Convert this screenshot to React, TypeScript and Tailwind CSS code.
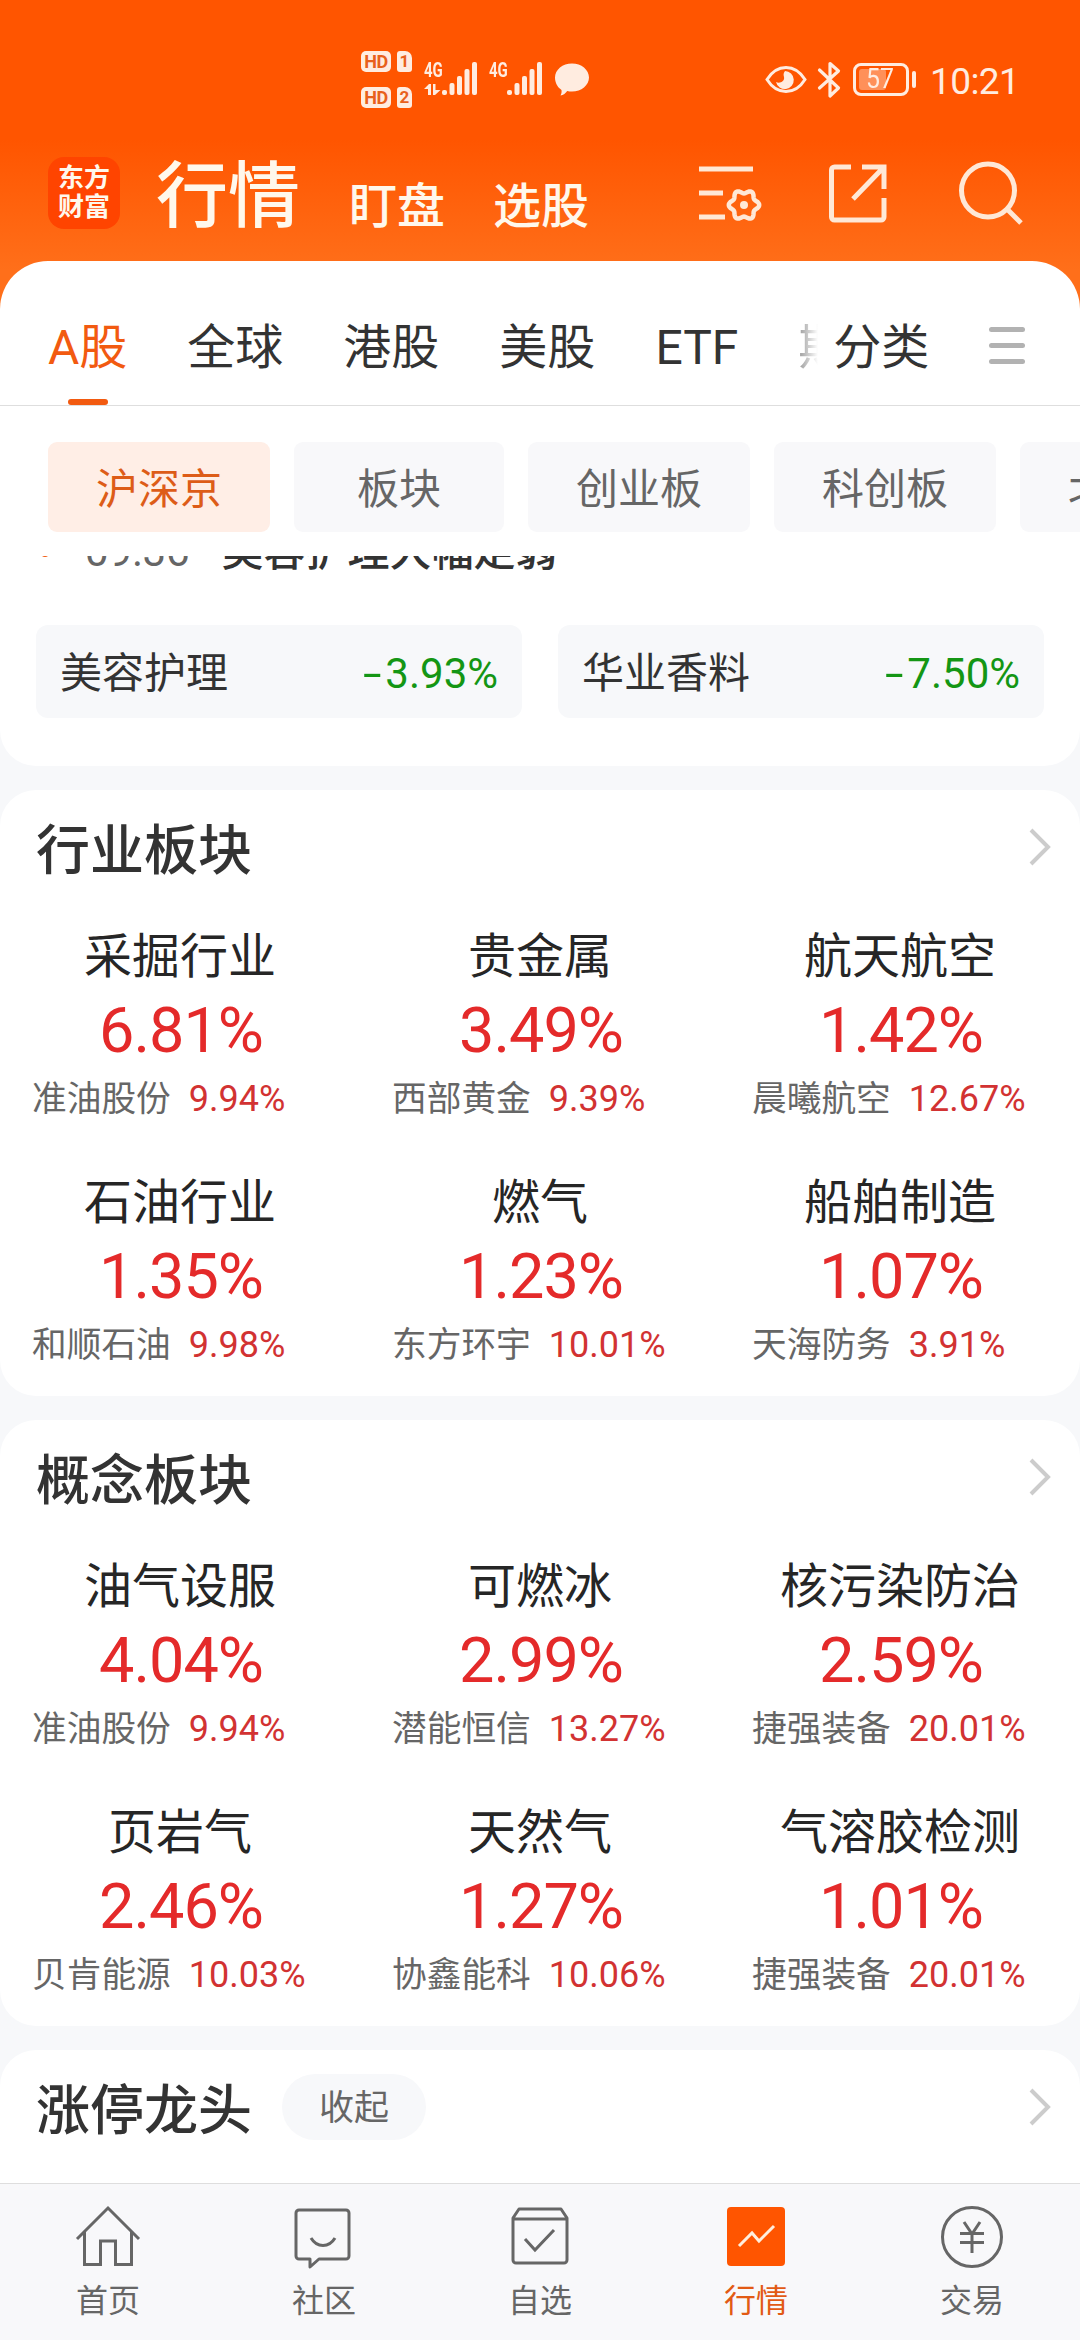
import { useState } from "react";
import type { ReactNode } from "react";

type Board = {
  name: string;
  change: string;
  stock: string;
  stockChange: string;
};

const industries: Board[] = [
  { name: "采掘行业", change: "6.81%", stock: "准油股份", stockChange: "9.94%" },
  { name: "贵金属", change: "3.49%", stock: "西部黄金", stockChange: "9.39%" },
  { name: "航天航空", change: "1.42%", stock: "晨曦航空", stockChange: "12.67%" },
  { name: "石油行业", change: "1.35%", stock: "和顺石油", stockChange: "9.98%" },
  { name: "燃气", change: "1.23%", stock: "东方环宇", stockChange: "10.01%" },
  { name: "船舶制造", change: "1.07%", stock: "天海防务", stockChange: "3.91%" },
];

const concepts: Board[] = [
  { name: "油气设服", change: "4.04%", stock: "准油股份", stockChange: "9.94%" },
  { name: "可燃冰", change: "2.99%", stock: "潜能恒信", stockChange: "13.27%" },
  { name: "核污染防治", change: "2.59%", stock: "捷强装备", stockChange: "20.01%" },
  { name: "页岩气", change: "2.46%", stock: "贝肯能源", stockChange: "10.03%" },
  { name: "天然气", change: "1.27%", stock: "协鑫能科", stockChange: "10.06%" },
  { name: "气溶胶检测", change: "1.01%", stock: "捷强装备", stockChange: "20.01%" },
];

const markets = ["A股", "全球", "港股", "美股", "ETF"];

const chips = [
  { label: "沪深京", width: "w-[222px]" },
  { label: "板块", width: "w-[210px]" },
  { label: "创业板", width: "w-[222px]" },
  { label: "科创板", width: "w-[222px]" },
  { label: "北交所", width: "w-[222px]" },
];

// Six-lobed gear outline around (47, 41)
const gearPoints = Array.from({ length: 120 }, (_, i) => {
  const a = (i * Math.PI) / 60;
  const r = 13.4 + 1.8 * Math.cos(6 * a);
  return `${(47 + r * Math.cos(a)).toFixed(2)},${(41 + r * Math.sin(a)).toFixed(2)}`;
}).join(" ");

// Status bar
const SimBadge = ({ n }: { n: string }) => (
  <div className="flex h-[21px] items-center gap-[6px]">
    <span className="flex h-[21px] w-[30px] items-center justify-center rounded-[5px] bg-[#ffece0] text-[18px] leading-none font-bold tracking-[-0.5px] text-[#e8601c]">
      HD
    </span>
    <span className="flex h-[21px] w-[15px] items-center justify-center rounded-[3px] rounded-tr-[7px] bg-[#ffece0] text-[17px] leading-none font-bold text-[#e8601c]">
      {n}
    </span>
  </div>
);

const Signal = ({ arrows }: { arrows?: boolean }) => (
  <div className="relative h-[34px] w-[54px]">
    <span className="absolute top-0 left-0 origin-left scale-x-[0.75] text-[20px] leading-[17px] font-bold">4G</span>
    <svg className="absolute inset-0" width="54" height="34" viewBox="0 0 54 34" fill="currentColor">
      {arrows && <path d="M0 27l5-5h2v11H4v-6zM9 22h2.500v6h5l-5.500 5H9z" />}
      <rect x="18" y="28" width="5" height="5" rx="2" />
      <rect x="25.500" y="21" width="5" height="12" rx="2" />
      <rect x="33" y="14" width="5" height="19" rx="2" />
      <rect x="40.500" y="7" width="5" height="26" rx="2" />
      <rect x="48" y="0" width="5" height="33" rx="2" />
    </svg>
  </div>
);

const StatusBar = () => (
  <div className="flex h-[158px] items-start pl-[361px] text-[#ffece0]">
    <div className="mt-[51px] flex flex-col gap-[15px]">
      <SimBadge n="1" />
      <SimBadge n="2" />
    </div>
    <div className="mt-[62px] ml-[12px] flex gap-[11px]">
      <Signal arrows />
      <Signal />
    </div>
    <svg className="mt-[62px] ml-[11px]" width="36" height="36" viewBox="0 0 36 36" fill="currentColor">
      <path d="M18 1.500c9.400 0 17 6.200 17 14s-7.600 14-17 14c-1.700 0-3.300-.2-4.800-.6-1.500 2.200-3.800 4-6.700 4.600.9-1.700 1.300-3.400 1-5.600C3.600 25.400 1 20.700 1 15.500c0-7.800 7.600-14 17-14z" />
    </svg>
    <svg className="mt-[62px] ml-[175px]" width="42" height="36" viewBox="0 0 42 36" fill="none" stroke="currentColor" strokeWidth="3">
      <path d="M2 17.500C7 9.500 13.500 5.500 21 5.500s14 4 19 12c-5 8-11.500 12-19 12s-14-4-19-12z" />
      <path d="M20 9a9 9 0 1 1-9 11c4 2 9-1 8-5-.4-2-1-3.500 1-6z" fill="currentColor" stroke="none" />
    </svg>
    <svg className="mt-[60px] ml-[10px]" width="25" height="40" viewBox="0 0 25 40" fill="none" stroke="currentColor" strokeWidth="3.200" strokeLinejoin="round" strokeLinecap="round">
      <path d="M2.500 10l19 18-8.500 8V3.500l8.500 7.500-19 17" />
    </svg>
    <div className="mt-[63px] ml-[11px] flex items-center gap-[3px]">
      <div className="flex h-[33px] w-[56px] items-center rounded-[8px] border-[3px] border-current p-[3px]">
        <div className="flex h-[21px] w-[27px] items-center rounded-[3px] bg-white/35 pl-[7px] text-[27px] leading-none">
          <span className="origin-left scale-x-[0.92]">57</span>
        </div>
      </div>
      <div className="h-[17px] w-[4px] rounded-full bg-current" />
    </div>
    <span className="mt-[63px] ml-[14px] text-[37px] leading-[37px] tracking-[-0.6px]">10:21</span>
  </div>
);

const Header = () => (
  <div className="flex h-[103px] items-start pl-[48px] whitespace-nowrap text-[#fff8ec]">
    <div className="mt-[-1px] flex h-[72px] w-[72px] shrink-0 flex-col items-center justify-center rounded-[16px] bg-[#ff4400] text-[26px] leading-[29px] font-bold">
      <span>东方</span>
      <span>财富</span>
    </div>
    <span className="mt-[3px] ml-[36px] shrink-0 text-[72px] leading-[72px] font-medium">行情</span>
    <span className="mt-[25px] ml-[49px] shrink-0 text-[48px] leading-[48px] font-medium">盯盘</span>
    <span className="mt-[25px] ml-[48px] shrink-0 text-[48px] leading-[48px] font-medium">选股</span>
    <svg className="mt-[6px] ml-[108px] shrink-0" width="66" height="58" viewBox="0 0 66 58" fill="none" stroke="#ffe8d6" strokeWidth="5">
      <path d="M2 5h54M2 29h24M2 53h26" />
      <polygon points={gearPoints} strokeWidth="4.500" strokeLinejoin="round" />
      <circle cx="47" cy="41" r="4" fill="#ffe8d6" stroke="none" />
    </svg>
    <svg className="mt-[5px] ml-[65px] shrink-0" width="60" height="60" viewBox="0 0 60 60" fill="none" stroke="#ffe8d6" strokeWidth="5">
      <path d="M23 4H6.500a3 3 0 0 0-3 3v47a3 3 0 0 0 3 3H53a3 3 0 0 0 3-3V35M34 4h22v22M56 4L25 36" />
    </svg>
    <svg className="mt-[3px] ml-[70px] shrink-0" width="66" height="66" viewBox="0 0 66 66" fill="none" stroke="#ffe8d6" strokeWidth="5">
      <circle cx="30" cy="29.500" r="26.500" />
      <path d="M49 48l14 14" />
    </svg>
  </div>
);

const MarketTabs = () => {
  const [active, setActive] = useState("A股");

  return (
    <div className="flex h-[145px] rounded-t-[48px] border-b border-[#dedede] bg-white pl-[48px] text-[48px] leading-[48px]">
      <div className="flex gap-[60px]">
        {markets.map((m) => (
          <button
            key={m}
            onClick={() => setActive(m)}
            className={`flex flex-col items-center whitespace-nowrap pt-[63px] ${
              active === m ? "text-[#f25a10]" : "text-[#333]"
            }`}
          >
            {m}
            {active === m && <span className="mt-[27px] h-[6px] w-[40px] rounded-full bg-[#f25a10]" />}
          </button>
        ))}
        <span className="w-[20px] overflow-hidden bg-gradient-to-r from-[#999] to-white bg-clip-text pt-[63px] text-transparent">期</span>
      </div>
      <span className="ml-[15px] pt-[63px] text-[#333]">分类</span>
      <div className="mt-[66px] ml-[60px] flex w-[36px] flex-col gap-[11px]">
        <span className="h-[5px] rounded-full bg-[#b2b2b2]" />
        <span className="h-[5px] rounded-full bg-[#b2b2b2]" />
        <span className="h-[5px] rounded-full bg-[#b2b2b2]" />
      </div>
    </div>
  );
};

const BoardChips = () => {
  const [active, setActive] = useState("沪深京");

  return (
    <div className="flex h-[150px] shrink-0 gap-[24px] overflow-hidden bg-white pt-[36px] pl-[48px]">
      {chips.map((c) => (
        <button
          key={c.label}
          onClick={() => setActive(c.label)}
          className={`flex h-[90px] shrink-0 items-center justify-center rounded-[9px] pt-[5px] text-[42px] leading-[42px] ${c.width} ${
            active === c.label ? "bg-[#ffeee6] text-[#dd5c18]" : "bg-[#f8f8fa] text-[#666]"
          }`}
        >
          {c.label}
        </button>
      ))}
    </div>
  );
};

const Chevron = () => (
  <svg width="24" height="38" viewBox="0 0 24 38" fill="none" stroke="#ccc" strokeWidth="4">
    <path d="M3 2l17 17L3 36" />
  </svg>
);

const SectionTitle = ({ title, children }: { title: string; children?: ReactNode }) => (
  <div className="flex h-[114px] items-center pr-[28px] pl-[36px]">
    <h2 className="mt-[9px] text-[54px] leading-[54px] font-medium text-[#333]">{title}</h2>
    {children}
    <span className="ml-auto">
      <Chevron />
    </span>
  </div>
);

const BoardSection = ({ title, boards }: { title: string; boards: Board[] }) => (
  <section className="mt-[24px] h-[606px] shrink-0 rounded-[36px] bg-white">
    <SectionTitle title={title} />
    <div className="grid grid-cols-3 gap-y-[62px] pt-[29px]">
      {boards.map((b) => (
        <div key={b.name} className="flex flex-col">
          <div className="text-center text-[48px] leading-[48px] text-[#262626]">{b.name}</div>
          <div className="mt-[18px] pl-[2px] text-center text-[63px] leading-[64px] tracking-[-1px] text-[#e42a2a]">{b.change}</div>
          <div className="mt-[18px] flex gap-[18px] pl-[32px] leading-[36px] whitespace-nowrap">
            <span className="text-[34.700px] text-[#666]">{b.stock}</span>
            <span className="text-[36px] text-[#d23232]">{b.stockChange}</span>
          </div>
        </div>
      ))}
    </div>
  </section>
);

const NewsQuote = ({ name, drop }: { name: string; drop: string }) => (
  <div className="flex h-[93px] flex-1 items-center rounded-[12px] bg-[#f7f8fa] px-[24px] pt-[4px] text-[42px] leading-[42px]">
    <span className="mr-auto text-[#333]">{name}</span>
    <span className="mr-[4px] origin-right scale-x-[1.6] text-[#149614]">-</span>
    <span className="text-[#149614]">{drop}</span>
  </div>
);

// Bottom navigation icons, all on a 66x64 canvas
const navItems: { label: string; icon: ReactNode }[] = [
  {
    label: "首页",
    icon: <path d="M2 34L33 3l31 31M9.500 27v32.500h16V36h15v23.500h16V27" />,
  },
  {
    label: "社区",
    icon: (
      <>
        <path d="M8 5h47a3 3 0 0 1 3 3v43a3 3 0 0 1-3 3H28l-9 8v-8H8a3 3 0 0 1-3-3V8a3 3 0 0 1 3-3z" strokeLinejoin="round" />
        <path d="M20 33c6 10 18 10 24 0" />
      </>
    ),
  },
  {
    label: "自选",
    icon: (
      <>
        <path d="M12 4h42l6 9v42a3 3 0 0 1-3 3H9a3 3 0 0 1-3-3V13zM6 14h54" strokeLinejoin="round" />
        <path d="M18 34l10 11 19-20" />
      </>
    ),
  },
  {
    label: "行情",
    icon: (
      <>
        <rect x="4" y="2" width="58" height="59" rx="4" fill="#ff5500" stroke="none" />
        <path d="M16 41l13-13 7 8 15-15" stroke="#ffeedd" />
      </>
    ),
  },
  {
    label: "交易",
    icon: (
      <>
        <circle cx="33" cy="32" r="29.500" />
        <path d="M25 17l8 12 8-12M33 29v19M21 28.500h24M21 37.500h24" />
      </>
    ),
  },
];

const BottomNav = () => {
  const [active, setActive] = useState("行情");

  return (
    <nav className="grid h-[157px] shrink-0 grid-cols-5 border-t border-[#dedede] bg-[#f8f8fa]">
      {navItems.map((item) => (
        <button
          key={item.label}
          onClick={() => setActive(item.label)}
          className={`flex flex-col items-center pt-[21px] ${active === item.label ? "text-[#e25a14]" : "text-[#666]"}`}
        >
          <svg width="66" height="64" viewBox="0 0 66 64" fill="none" stroke="currentColor" strokeWidth="3">
            {item.icon}
          </svg>
          <span className="mt-[16px] text-[32px] leading-[32px]">{item.label}</span>
        </button>
      ))}
    </nav>
  );
};

const App = () => {
  return (
    <div className="flex h-[2340px] w-[1080px] flex-col overflow-hidden bg-[#f7f8fa] font-[Roboto,'Noto_Sans_CJK_SC',sans-serif]">
      <div className="shrink-0 bg-[linear-gradient(180deg,#ff5500_140px,#ff6f1a_270px)]">
        <StatusBar />
        <Header />
        <MarketTabs />
      </div>
      <BoardChips />

      <main className="flex flex-1 flex-col overflow-hidden">
        {/* News flash, scrolled under the sticky chips */}
        <section className="h-[210px] shrink-0 overflow-hidden rounded-b-[36px] bg-white">
          <div className="mt-[-25px] flex items-center pl-[40px] text-[42px] leading-[42px]">
            <span className="h-[10px] w-[10px] rounded-full bg-[#f25a10]" />
            <span className="ml-[35px] text-[#666]">09:36</span>
            <span className="ml-[32px] font-medium text-[#333]">美容护理大幅走弱</span>
          </div>
          <div className="mt-[52px] flex gap-[36px] px-[36px]">
            <NewsQuote name="美容护理" drop="3.93%" />
            <NewsQuote name="华业香料" drop="7.50%" />
          </div>
        </section>

        <BoardSection title="行业板块" boards={industries} />
        <BoardSection title="概念板块" boards={concepts} />

        <section className="mt-[24px] h-[300px] shrink-0 rounded-[36px] bg-white">
          <SectionTitle title="涨停龙头">
            <button className="ml-[30px] flex h-[66px] w-[144px] items-center justify-center rounded-full bg-[#f7f8fa] pt-[3px] text-[35px] leading-[35px] text-[#666]">
              收起
            </button>
          </SectionTitle>
        </section>
      </main>

      <BottomNav />
    </div>
  );
};

export default App;
